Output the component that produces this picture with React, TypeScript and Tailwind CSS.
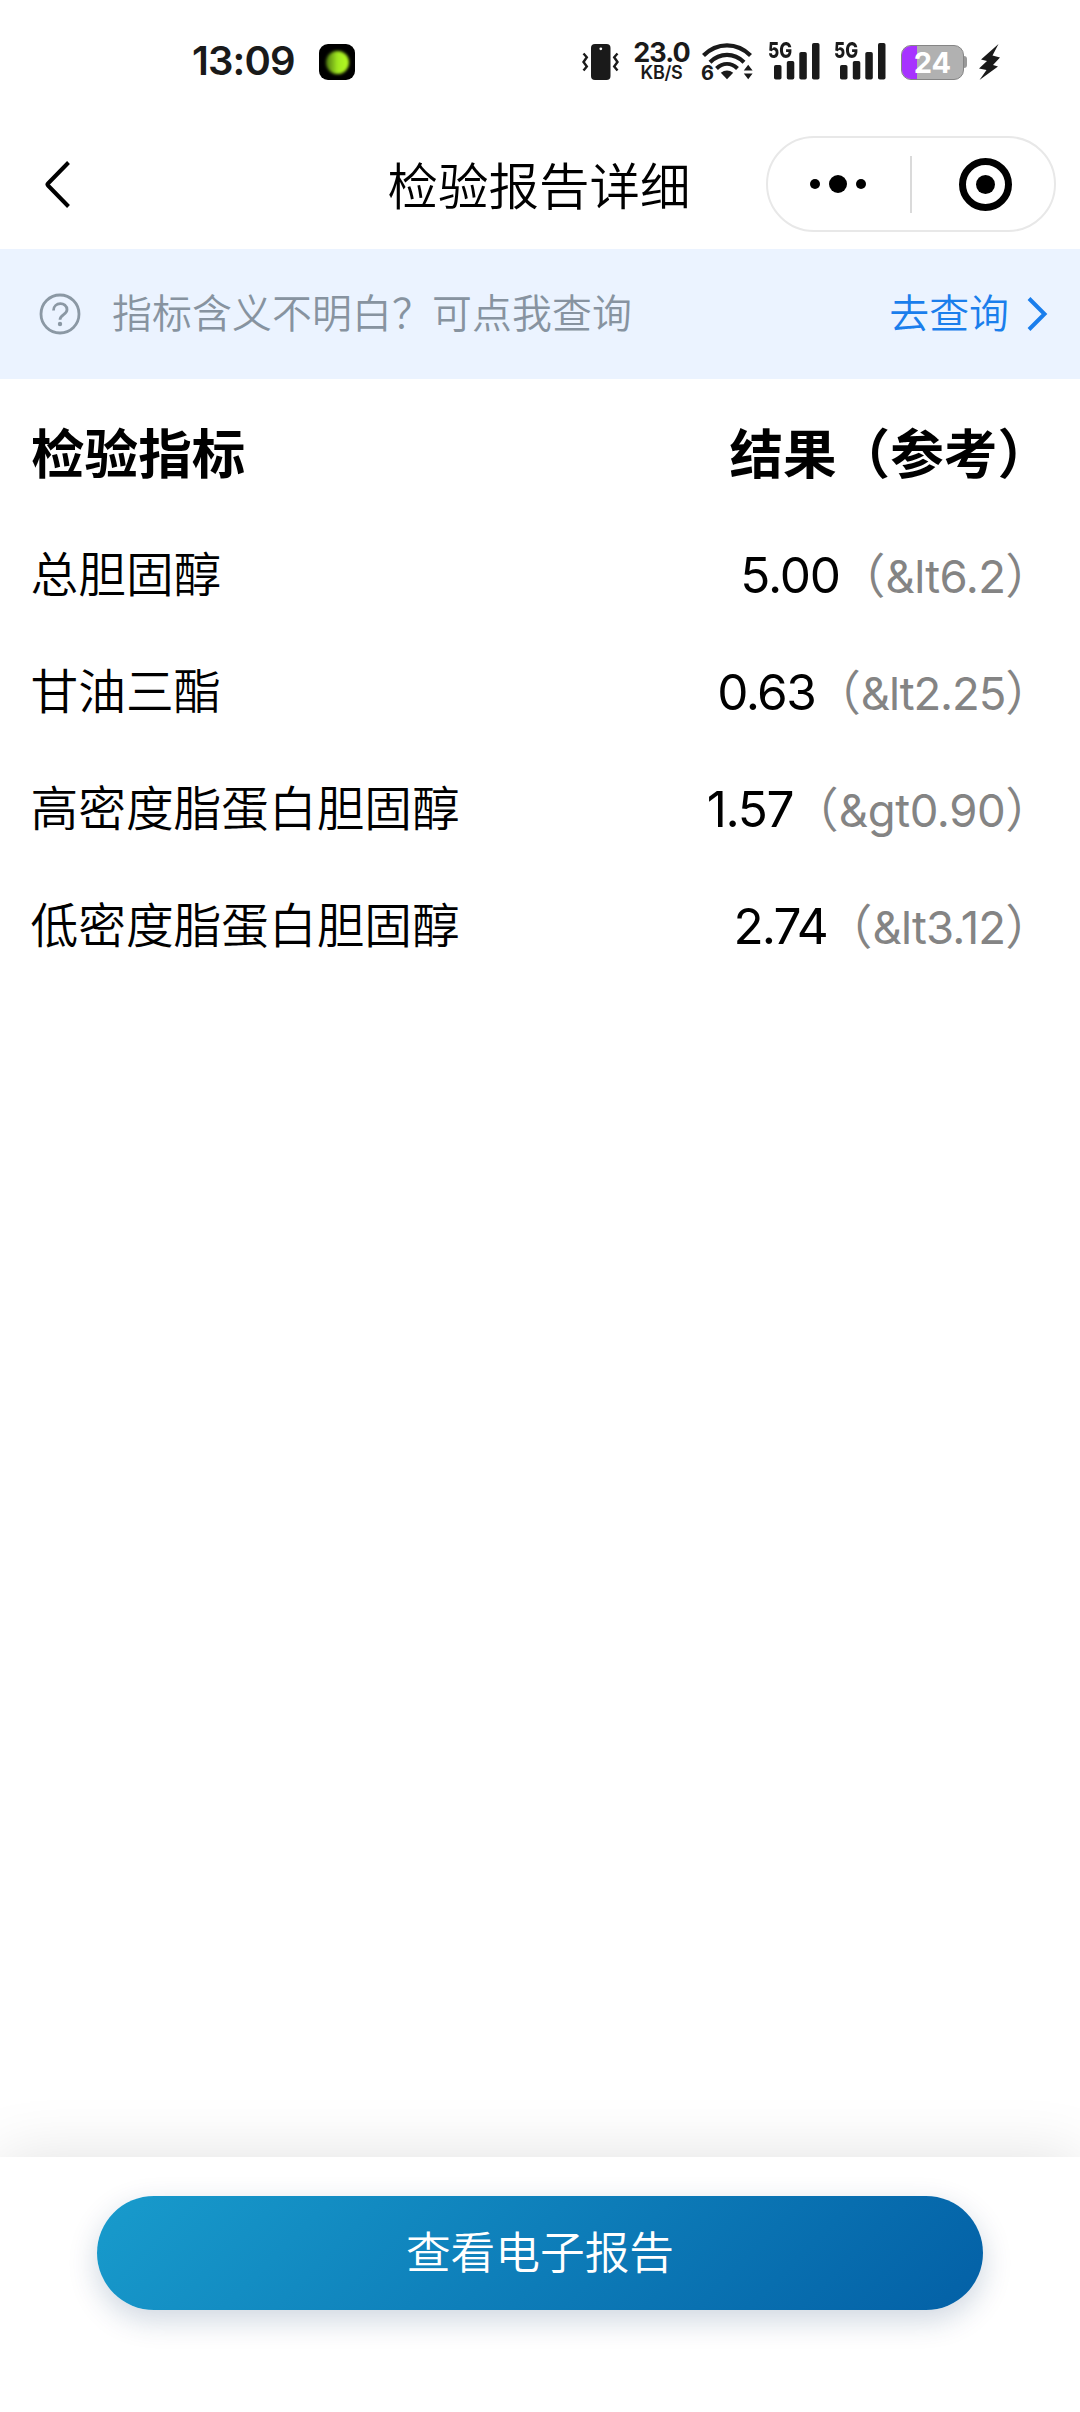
import React from "react";

const latin = "font-['Inter','Noto_Sans_CJK_SC',sans-serif]";

const rows = [
  { name: "总胆固醇", value: "5.00", range: "&lt6.2", valueTrack: "tracking-[-1.2px]", rangeTrack: "tracking-[-0.6px]" },
  { name: "甘油三酯", value: "0.63", range: "&lt2.25", valueTrack: "tracking-[-1.6px]", rangeTrack: "tracking-[-1.1px]" },
  { name: "高密度脂蛋白胆固醇", value: "1.57", range: "&gt0.90", valueTrack: "tracking-[-1.4px]", rangeTrack: "tracking-[-0.4px]" },
  { name: "低密度脂蛋白胆固醇", value: "2.74", range: "&lt3.12", valueTrack: "tracking-[-1.9px]", rangeTrack: "tracking-[-0.8px]" },
];

function VibrateIcon() {
  return (
    <svg className="h-9 w-[38px]" viewBox="0 0 38 36" fill="none">
      <rect x="9" y="0" width="19.500" height="36" rx="4" fill="#1a1a1a" />
      <circle cx="18.800" cy="4.800" r="1.400" fill="#fff" />
      <path d="M1.5 9.5 4.8 13.3 1.5 18l3.3 4.5-3.3 4M35.5 9.5 32.2 13.3l3.3 4.700-3.3 4.500 3.3 4" stroke="#1a1a1a" strokeWidth="2.400" />
    </svg>
  );
}

function WifiIcon() {
  return (
    <svg className="h-10 w-[52px]" viewBox="0 0 52 40" fill="none" stroke="#1a1a1a">
      <path d="M1.5 13.5C15 0 35 0 48.500 13.500" strokeWidth="4.2" />
      <path d="M8 20.200C18 10.500 32 10.500 42 20.200" strokeWidth="4.2" />
      <path d="M14.500 26.500C21 20.500 29 20.500 35.500 26.500" strokeWidth="4.2" />
      <path d="M25 37.200 18.800 30.800Q25 26.400 31.200 30.800Z" fill="#1a1a1a" stroke="none" />
      <path d="M46.200 22.800 50.600 28.500H41.800ZM46.200 37.200 41.800 31.500H50.600Z" fill="#1a1a1a" stroke="none" />
    </svg>
  );
}

function Signal() {
  return (
    <div className="relative h-10 w-[52px]">
      <span className="absolute left-0 -top-[5px] origin-left scale-x-[0.78] text-[22px] font-extrabold leading-[26px]">5G</span>
      <svg className="h-10 w-[52px]" viewBox="0 0 52 40" fill="#1a1a1a">
        <rect x="6" y="23" width="7.500" height="14.500" rx="1.800" />
        <rect x="18.800" y="19" width="7.500" height="18.500" rx="1.800" />
        <rect x="31.300" y="10" width="7.500" height="27.500" rx="1.800" />
        <rect x="44" y="1" width="7.500" height="36.500" rx="1.800" />
      </svg>
    </div>
  );
}

function Battery() {
  return (
    <div className="flex items-center">
      <div className="relative flex h-[35px] w-[63px] items-center justify-center overflow-hidden rounded-[10px] border border-[#858585] bg-[#b1b1b1]">
        <div className="absolute inset-y-0 left-0 w-[15px] bg-[#a733ff]" />
        <span className="relative text-[29px] font-bold leading-none text-white">24</span>
      </div>
      <div className="h-3 w-[3px] rounded-r-[3px] bg-[#999]" />
    </div>
  );
}

function StatusBar() {
  return (
    <header className="flex h-[124px] items-center text-[#1a1a1a]">
      <div className="ml-[192px] w-[127px] text-[40px] font-semibold leading-none tracking-[-0.9px]">
        <span className="relative -top-px">13:09</span>
      </div>
      <div className="flex size-9 items-center justify-center rounded-[9px] bg-black">
        <div className="size-[23px] rounded-full bg-linear-to-r from-[#4f7a10] via-[#a0e820] to-[#b5fb21] blur-[1.5px]" />
      </div>
      <div className="ml-[227px]"><VibrateIcon /></div>
      <div className="ml-[12px] flex w-[59px] flex-col items-center pb-[2px]">
        <span className="text-[27px] font-bold leading-[22px] tracking-[-1px]">23.0</span>
        <span className="text-[18px] font-semibold leading-[17px] tracking-[-0.3px]">KB/S</span>
      </div>
      <div className="relative ml-[11px]">
        <WifiIcon />
        <span className="absolute -left-px bottom-[-1px] text-[20px] font-bold leading-[20px]">6</span>
      </div>
      <div className="ml-[14px]"><Signal /></div>
      <div className="ml-[14px]"><Signal /></div>
      <div className="ml-[15px]"><Battery /></div>
      <svg className="ml-[12px] h-9 w-[21px]" viewBox="0 0 21 36" fill="#1a1a1a">
        <path d="M19.500 0 2 15.500 8 17 0 24.500 7.500 26 0.500 36 19 22.500 14 21 21 13.500 13.500 11.500Z" />
      </svg>
    </header>
  );
}

function NavBar() {
  return (
    <nav className="grid h-[125px] grid-cols-[364px_352px_364px] items-center">
      <div className="pl-[44px]">
        <svg className="mb-[4px] h-[47px] w-[27px]" viewBox="0 0 27 47" fill="none" stroke="#000" strokeWidth="4" strokeLinejoin="round">
          <path d="M24.500 1.500 4 22.500Q3 23.500 4 24.500L24.500 45.500" />
        </svg>
      </div>
      <h1 className="pr-[2px] text-center text-[50.5px] font-[350] leading-[60px] text-black">检验报告详细</h1>
      <div className="mb-[5px] ml-[50px] flex h-24 w-[290px] items-center rounded-full border-2 border-[#e8e8e8]">
        <div className="flex w-[142px] items-center justify-center gap-[9px] pr-[3px]">
          <span className="size-[10px] rounded-full bg-black" />
          <span className="size-[18px] rounded-full bg-black" />
          <span className="size-[10px] rounded-full bg-black" />
        </div>
        <span className="h-[57px] w-[2px] bg-[#dadada]" />
        <div className="flex flex-1 justify-center pl-[5px]">
          <span className="flex size-[53px] items-center justify-center rounded-full border-[7px] border-black">
            <span className="size-[19px] rounded-full bg-black" />
          </span>
        </div>
      </div>
    </nav>
  );
}

function HelpBanner() {
  return (
    <section className="flex h-[130px] items-center bg-[#ebf3ff] pl-[39px] pr-[30px] text-[39.9px] leading-[60px]">
      <svg className="h-[42px] w-[42px]" viewBox="0 0 42 42" fill="none" stroke="#8b98a4" strokeWidth="2.8">
        <circle cx="21" cy="21" r="19" />
        <path d="M14.500 17.500C14.500 8.500 28 8.500 28 16.800 28 21.500 21 21.800 21 26.800" />
        <circle cx="21" cy="31" r="2.200" fill="#8b98a4" stroke="none" />
      </svg>
      <p className="ml-[31px] font-[350] tracking-[0.1px] text-[#8793a0]">指标含义不明白？可点我查询</p>
      <a className="ml-auto flex items-center font-[350] text-[#1a7eec]">
        去查询
        <svg className="ml-[17px] h-[36px] w-[24px]" viewBox="0 0 24 36" fill="none" stroke="#1a7eec" strokeWidth="4">
          <path d="M3 2.500 18.500 18 3 33.500" />
        </svg>
      </a>
    </section>
  );
}

export default function App() {
  return (
    <div className={`${latin} flex h-[2412px] w-[1080px] flex-col overflow-hidden bg-white`}>
      <StatusBar />
      <NavBar />
      <HelpBanner />
      <main className="flex-1 px-[31px] pt-[17px] text-black">
        <div className="mb-[4px] flex h-[117px] items-center justify-between text-[53.6px] font-bold leading-none">
          <span>检验指标</span>
          <span className="mr-[-2px]">结果（参考）</span>
        </div>
        {rows.map((row) => (
          <div key={row.name} className="flex h-[117px] items-center justify-between text-[47.7px] font-[350] leading-none">
            <span className="ml-[-0.5px]">{row.name}</span>
            <span className="mr-[-4px] flex items-baseline">
              <span className={`text-[49.5px] font-normal ${row.valueTrack}`}>{row.value}</span>
              <span className="ml-[-2px] font-normal text-[#848484]">
                （<span className={`text-[45.5px] ${row.rangeTrack}`}>{row.range}</span>）
              </span>
            </span>
          </div>
        ))}
      </main>
      <footer className="flex h-[255px] justify-center pt-[39px] shadow-[0_0_60px_rgba(0,0,0,0.12)]">
        <button className="h-[114px] w-[886px] rounded-full bg-linear-[135deg,#189bcc,#0360a6] text-[44.7px] font-[350] leading-none text-white shadow-[0_10px_30px_rgba(10,50,100,0.2)]">
          查看电子报告
        </button>
      </footer>
    </div>
  );
}
